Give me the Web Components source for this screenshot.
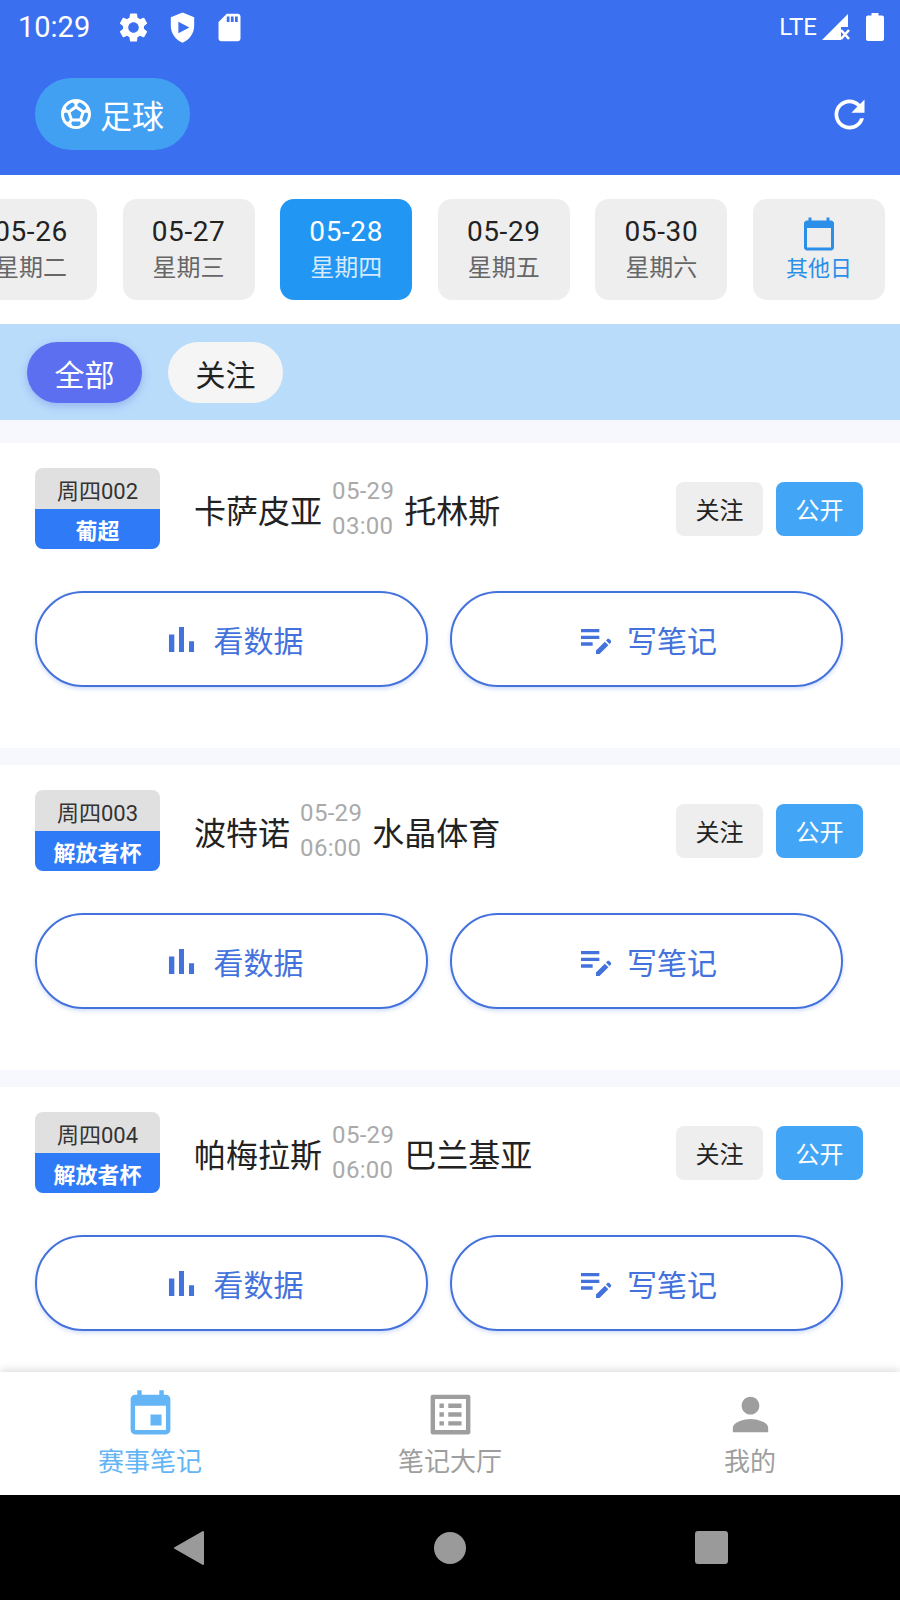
<!DOCTYPE html>
<html lang="zh-CN">
<head>
<meta charset="utf-8">
<title>赛事笔记</title>
<style>
    html, body { margin: 0; padding: 0; }
    body { width: 900px; height: 1600px; overflow: hidden; background: #fff; font-family: Roboto, "Noto Sans CJK SC", sans-serif; }
    #app { display: flex; flex-direction: column; height: 1600px; }
</style>
</head>
<body>
<div id="app">
    <app-header></app-header>
    <date-strip></date-strip>
    <filter-bar></filter-bar>
    <match-list>
        <match-card code="周四002" league="葡超" home="卡萨皮亚" away="托林斯" day="05-29" time="03:00"></match-card>
        <match-card code="周四003" league="解放者杯" home="波特诺" away="水晶体育" day="05-29" time="06:00"></match-card>
        <match-card code="周四004" league="解放者杯" home="帕梅拉斯" away="巴兰基亚" day="05-29" time="06:00"></match-card>
    </match-list>
    <bottom-nav></bottom-nav>
    <system-nav></system-nav>
</div>

<script>
// Shared font stack, Roboto for digits and CJK fallback for the rest
const FONT = 'Roboto, "Noto Sans CJK SC", sans-serif';

// Material icon paths
const ICONS = {
    gear: 'M19.14 12.94c.04-.3.06-.61.06-.94 0-.32-.02-.64-.07-.94l2.03-1.58c.18-.14.23-.41.12-.61l-1.92-3.32c-.12-.22-.37-.29-.59-.22l-2.39.96c-.5-.38-1.03-.7-1.62-.94l-.36-2.54c-.04-.24-.24-.41-.48-.41h-3.84c-.24 0-.43.17-.47.41l-.36 2.54c-.59.24-1.13.57-1.62.94l-2.39-.96c-.22-.08-.47 0-.59.22L2.74 8.87c-.12.21-.08.47.12.61l2.03 1.58c-.05.3-.09.63-.09.94s.02.64.07.94l-2.03 1.58c-.18.14-.23.41-.12.61l1.92 3.32c.12.22.37.29.59.22l2.39-.96c.5.38 1.03.7 1.62.94l.36 2.54c.05.24.24.41.48.41h3.84c.24 0 .44-.17.47-.41l.36-2.54c.59-.24 1.13-.56 1.62-.94l2.39.96c.22.08.47 0 .59-.22l1.92-3.32c.12-.22.07-.47-.12-.61l-2.01-1.58zM12 15.6c-1.98 0-3.6-1.62-3.6-3.6s1.62-3.6 3.6-3.6 3.6 1.62 3.6 3.6-1.62 3.6-3.6 3.6z',
    shield: 'M12 1 3.5 4.6v6.2c0 5.4 3.6 10.5 8.5 12.2 4.9-1.7 8.5-6.8 8.5-12.2V4.6L12 1zm-3 6.8 8 4.2-8 4.2V7.8z',
    sd: 'M18 2h-8L4.02 8 4 20c0 1.1.9 2 2 2h12c1.1 0 2-.9 2-2V4c0-1.1-.9-2-2-2zm-6 6h-2V4h2v4zm3 0h-2V4h2v4zm3 0h-2V4h2v4z',
    refresh: 'M17.65 6.35C16.2 4.9 14.21 4 12 4c-4.42 0-7.99 3.58-7.99 8s3.57 8 7.99 8c3.73 0 6.84-2.55 7.73-6h-2.08c-.82 2.33-3.04 4-5.65 4-3.31 0-6-2.69-6-6s2.69-6 6-6c1.66 0 3.14.69 4.22 1.78L13 11h7V4l-2.35 2.35z',
    soccer: 'M12 2C6.48 2 2 6.48 2 12s4.48 10 10 10 10-4.48 10-10S17.52 2 12 2zm1 3.3l1.35-.95c1.82.56 3.37 1.76 4.38 3.34l-.39 1.34-1.35.46L13 6.7V5.3zm-3.35-.95L11 5.3v1.4L7.01 9.49l-1.35-.46-.39-1.34c1.01-1.57 2.56-2.77 4.38-3.34zM7.08 17.11l-1.14.1C4.73 15.81 4 13.99 4 12c0-.12.01-.23.02-.35l1-.73 1.38.48 1.46 4.34-.78 1.37zm7.42 2.48c-.79.26-1.63.41-2.5.41s-1.71-.15-2.5-.41l-.69-1.49.64-1.1h5.11l.64 1.11-.7 1.48zM14.27 15H9.73l-1.35-4.02L12 8.44l3.63 2.54L14.27 15zm3.79 2.21l-1.14-.1-.79-1.37 1.46-4.34 1.39-.47 1 .73c.01.11.02.22.02.34 0 1.99-.73 3.81-1.94 5.21z',
    today: 'M20 3h-1V1h-2v2H7V1H5v2H4c-1.1 0-2 .9-2 2v16c0 1.1.9 2 2 2h16c1.1 0 2-.9 2-2V5c0-1.1-.9-2-2-2zm0 18H4V8h16v13z',
    event: 'M17 12h-5v5h5v-5zM16 1v2H8V1H6v2H5c-1.11 0-1.99.9-1.99 2L3 19c0 1.1.89 2 2 2h14c1.1 0 2-.9 2-2V5c0-1.1-.9-2-2-2h-1V1h-2zm3 18H5V8h14v11z',
    list: 'M19 5v14H5V5h14m1.1-2H3.9c-.5 0-.9.4-.9.9v16.2c0 .4.4.9.9.9h16.2c.4 0 .9-.5.9-.9V3.9c0-.5-.5-.9-.9-.9zM11 7h6v2h-6V7zm0 4h6v2h-6v-2zm0 4h6v2h-6zM7 7h2v2H7zm0 4h2v2H7zm0 4h2v2H7z',
    person: 'M12 12c2.21 0 4-1.79 4-4s-1.79-4-4-4-4 1.79-4 4 1.79 4 4 4zm0 2c-2.67 0-8 1.34-8 4v2h16v-2c0-2.66-5.33-4-8-4z',
    bars: 'M5 9.2h3V19H5zM10.6 5h2.8v14h-2.8zm5.6 8H19v6h-2.8z',
    note: 'M3 10h11v2H3v-2zm0-2h11V6H3v2zm0 8h7v-2H3v2zm15.01-3.13.71-.71c.39-.39 1.02-.39 1.41 0l.71.71c.39.39.39 1.02 0 1.41l-.71.71-2.12-2.12zm-.71.71-5.3 5.3V21h2.12l5.3-5.3-2.12-2.12z'
};

function icon(name, size, color) {
    return `<svg width="${size}" height="${size}" viewBox="0 0 24 24" fill="${color}" style="display:block;flex:none"><path fill-rule="evenodd" d="${ICONS[name]}"/></svg>`;
}

class AppHeader extends HTMLElement {
    constructor() {
        super();
        this.attachShadow({ mode: 'open' });
    }

    connectedCallback() {
        this.shadowRoot.innerHTML = `
            <style>
                :host { display: block; background: #3a6ff0; color: #fff; height: 175px; font-family: ${FONT}; flex: none; }
                .status { display: flex; align-items: center; height: 54px; padding: 0 16px 0 18px; }
                .clock { font-size: 29px; width: 98px; }
                .icons { display: flex; align-items: center; gap: 14px; }
                .icons svg:first-child { margin-right: 1px; }
                .right { margin-left: auto; display: flex; align-items: center; }
                .lte { font-size: 24px; margin-right: 4px; }
                .bar { display: flex; align-items: center; justify-content: space-between; height: 72px; margin-top: 24px; padding: 0 28px 0 35px; }
                .pill { display: flex; align-items: center; gap: 6px; width: 155px; height: 72px; box-sizing: border-box; padding-left: 23px; border-radius: 36px; background: #42a0f3; font-size: 32px; }
            </style>
            <div class="status">
                <span class="clock">10:29</span>
                <span class="icons">${icon('gear', 35, '#fff')}${icon('shield', 33, '#fff')}${icon('sd', 33, '#fff')}</span>
                <span class="right">
                    <span class="lte">LTE</span>
                    <svg width="30" height="28" viewBox="0 0 30 28" style="display:block"><path fill="#fff" d="M1 27 27 1v13h-7v13z"/><path stroke="#fff" stroke-width="2.6" d="m20 17 8 9m0-9-8 9"/></svg>
                    <svg width="18" height="28" viewBox="0 0 18 28" style="display:block;margin-left:15px"><path fill="#fff" d="M5.5 0h7v2.5H16c1.1 0 2 .9 2 2V26c0 1.1-.9 2-2 2H2c-1.1 0-2-.9-2-2V4.500c0-1.100.9-2 2-2h3.500z"/></svg>
                </span>
            </div>
            <div class="bar">
                <div class="pill">${icon('soccer', 36, '#fff')}<span>足球</span></div>
                ${icon('refresh', 45, '#fff')}
            </div>
        `;
    }
}

class DateChip extends HTMLElement {
    connectedCallback() {
        const active = this.hasAttribute('active');
        const pick = this.hasAttribute('pick');
        const root = this.shadowRoot || this.attachShadow({ mode: 'open' });
        root.innerHTML = `
            <style>
                :host { display: flex; flex-direction: column; align-items: center; justify-content: center; flex: none; width: 132px; height: 101px; border-radius: 14px; background: ${active ? '#2196f3' : '#eeeeee'}; font-family: ${FONT}; }
                .date { font-size: 28px; line-height: 36px; letter-spacing: .6px; color: ${active ? '#fff' : '#222'}; }
                .week { font-size: 24px; line-height: 36px; color: ${active ? '#d4eafd' : '#666'}; }
                .other { font-size: 22px; line-height: 30px; margin-top: 2px; color: #2b8ee8; }
            </style>
            ${pick
                ? `${icon('today', 36, '#2b8ee8')}<span class="other">其他日</span>`
                : `<span class="date">${this.getAttribute('date')}</span><span class="week">${this.getAttribute('week')}</span>`}
        `;
    }
}

class DateStrip extends HTMLElement {
    constructor() {
        super();
        this.attachShadow({ mode: 'open' });
    }

    connectedCallback() {
        this.shadowRoot.innerHTML = `
            <style>
                :host { display: block; flex: none; background: #fff; padding: 24px 0 24px 3px; overflow: hidden; }
                .track { display: flex; gap: 25.6px; margin-left: -38px; }
            </style>
            <div class="track">
                <date-chip date="05-26" week="星期二"></date-chip>
                <date-chip date="05-27" week="星期三"></date-chip>
                <date-chip date="05-28" week="星期四" active></date-chip>
                <date-chip date="05-29" week="星期五"></date-chip>
                <date-chip date="05-30" week="星期六"></date-chip>
                <date-chip pick></date-chip>
            </div>
        `;
    }
}

class FilterBar extends HTMLElement {
    constructor() {
        super();
        this.attachShadow({ mode: 'open' });
    }

    connectedCallback() {
        this.shadowRoot.innerHTML = `
            <style>
                :host { display: flex; flex: none; gap: 26px; height: 96px; box-sizing: border-box; padding: 18px 27px 0; background: #b9dcfb; font-family: ${FONT}; }
                .tab { display: flex; align-items: center; justify-content: center; width: 115px; height: 61px; border-radius: 31px; font-size: 30px; background: #f5f5f5; color: #222; }
                .on { background: #5b6ff0; color: #fff; box-shadow: 0 3px 8px rgba(70, 90, 220, .3); }
            </style>
            <span class="tab on">全部</span>
            <span class="tab">关注</span>
        `;
    }
}

class MatchList extends HTMLElement {
    constructor() {
        super();
        this.attachShadow({ mode: 'open' });
    }

    connectedCallback() {
        this.shadowRoot.innerHTML = `
            <style>
                :host { display: flex; flex-direction: column; gap: 17px; flex: 1; min-height: 0; overflow: hidden; padding-top: 23px; background: #f7f8fe; }
            </style>
            <slot></slot>
        `;
    }
}

class MatchCard extends HTMLElement {
    constructor() {
        super();
        this.attachShadow({ mode: 'open' });
    }

    connectedCallback() {
        const attr = (n) => this.getAttribute(n);
        this.shadowRoot.innerHTML = `
            <style>
                :host { display: block; flex: none; height: 305px; box-sizing: border-box; padding: 25px 37px 0 35px; background: #fff; font-family: ${FONT}; }
                .row { display: flex; align-items: center; height: 81px; }
                .badge { flex: none; width: max-content; height: 81px; border-radius: 8px; overflow: hidden; display: flex; flex-direction: column; }
                .code { display: flex; align-items: center; justify-content: center; height: 41px; padding: 0 22px; background: #e0e0e0; color: #333; font-size: 22px; }
                .league { display: flex; align-items: center; justify-content: center; flex: 1; background: #2f7bf7; color: #fff; font-size: 22px; font-weight: 700; }
                .teams { display: flex; align-items: center; gap: 10px; margin-left: 34px; font-size: 32px; color: #222; }
                .time { font-size: 24px; line-height: 35px; color: #aaa; letter-spacing: .3px; display: flex; flex-direction: column; }
                .actions { display: flex; gap: 13px; margin-left: auto; }
                .act { display: flex; align-items: center; justify-content: center; width: 87px; height: 54px; border-radius: 8px; font-size: 24px; background: #eeeeee; color: #222; }
                .pub { background: #42a5f5; color: #fff; }
                .btns { display: flex; gap: 22px; margin-top: 42px; }
                .btn { display: flex; align-items: center; justify-content: center; gap: 11px; box-sizing: border-box; width: 393px; height: 96px; border: 2px solid #4472dc; border-radius: 48px; background: #fff; color: #4472dc; font-size: 30px; box-shadow: 0 2px 4px rgba(68, 114, 220, .25); }
            </style>
            <div class="row">
                <div class="badge"><span class="code">${attr('code')}</span><span class="league">${attr('league')}</span></div>
                <div class="teams">
                    <span>${attr('home')}</span>
                    <span class="time"><span>${attr('day')}</span><span>${attr('time')}</span></span>
                    <span>${attr('away')}</span>
                </div>
                <div class="actions"><span class="act">关注</span><span class="act pub">公开</span></div>
            </div>
            <div class="btns">
                <div class="btn">${icon('bars', 43, '#4472dc')}<span>看数据</span></div>
                <div class="btn">${icon('note', 40, '#4472dc')}<span>写笔记</span></div>
            </div>
        `;
    }
}

class BottomNav extends HTMLElement {
    constructor() {
        super();
        this.attachShadow({ mode: 'open' });
    }

    connectedCallback() {
        const item = (name, label, color) => `
            <div class="item" style="color:${color}">${icon(name, 53, color)}<span>${label}</span></div>`;
        this.shadowRoot.innerHTML = `
            <style>
                :host { display: flex; flex: none; height: 123px; box-sizing: border-box; padding-top: 16px; background: #fff; box-shadow: 0 -2px 8px rgba(0, 0, 0, .14); position: relative; font-family: ${FONT}; }
                .item { flex: 1; display: flex; flex-direction: column; align-items: center; font-size: 26px; }
                .item span { line-height: 36px; margin-top: 3px; }
            </style>
            ${item('event', '赛事笔记', '#64b5f6')}
            ${item('list', '笔记大厅', '#9e9e9e')}
            ${item('person', '我的', '#9e9e9e')}
        `;
    }
}

class SystemNav extends HTMLElement {
    constructor() {
        super();
        this.attachShadow({ mode: 'open' });
    }

    connectedCallback() {
        this.shadowRoot.innerHTML = `
            <style>
                :host { display: flex; flex: none; justify-content: center; align-items: center; height: 105px; background: #000; }
                .cell { width: 261px; display: flex; justify-content: center; }
                svg { display: block; }
            </style>
            <div class="cell"><svg width="32" height="36" viewBox="0 0 32 36"><path fill="#9a9a9a" stroke="#9a9a9a" stroke-width="2" stroke-linejoin="round" d="M30 2v32L2 18z"/></svg></div>
            <div class="cell"><svg width="32" height="32" viewBox="0 0 32 32"><circle cx="16" cy="16" r="16" fill="#9a9a9a"/></svg></div>
            <div class="cell"><svg width="33" height="33" viewBox="0 0 33 33"><rect width="33" height="33" rx="3" fill="#9a9a9a"/></svg></div>
        `;
    }
}

customElements.define('app-header', AppHeader);
customElements.define('date-chip', DateChip);
customElements.define('date-strip', DateStrip);
customElements.define('filter-bar', FilterBar);
customElements.define('match-list', MatchList);
customElements.define('match-card', MatchCard);
customElements.define('bottom-nav', BottomNav);
customElements.define('system-nav', SystemNav);
</script>
</body>
</html>
